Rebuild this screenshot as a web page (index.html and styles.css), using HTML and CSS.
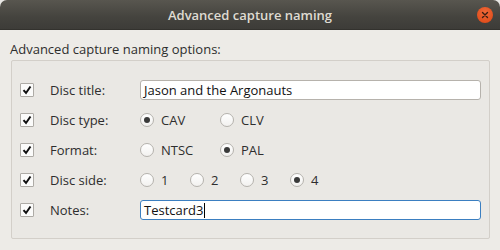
FILE: index.html
```html
<!DOCTYPE html>
<html>
<head>
<meta charset="utf-8">
<link rel="stylesheet" href="styles.css">
</head>
<body>
<div class="window">
  <div class="titlebar">
    <span class="title">Advanced capture naming</span>
    <span class="close"><svg width="16" height="16" viewBox="0 0 16 16"><path d="M5.5 5.5 L10.5 10.5 M10.5 5.5 L5.5 10.5" stroke="#3a1e12" stroke-width="1.4" stroke-linecap="round"/></svg></span>
  </div>
  <div class="content">
    <div class="heading">Advanced capture naming options:</div>
    <div class="group">
      <div class="row">
        <span class="check"><svg width="12" height="12" viewBox="0 0 12 12"><path d="M2.5 6.2 L5 9 L9.5 2.5" fill="none" stroke="#111" stroke-width="2"/></svg></span>
        <span class="label">Disc title:</span>
        <div class="input">Jason and the Argonauts</div>
      </div>
      <div class="row">
        <span class="check"><svg width="12" height="12" viewBox="0 0 12 12"><path d="M2.5 6.2 L5 9 L9.5 2.5" fill="none" stroke="#111" stroke-width="2"/></svg></span>
        <span class="label">Disc type:</span>
        <span class="opt wide"><span class="radio on"></span>CAV</span>
        <span class="opt wide"><span class="radio"></span>CLV</span>
      </div>
      <div class="row">
        <span class="check"><svg width="12" height="12" viewBox="0 0 12 12"><path d="M2.5 6.2 L5 9 L9.5 2.5" fill="none" stroke="#111" stroke-width="2"/></svg></span>
        <span class="label">Format:</span>
        <span class="opt wide"><span class="radio"></span>NTSC</span>
        <span class="opt wide"><span class="radio on"></span>PAL</span>
      </div>
      <div class="row">
        <span class="check"><svg width="12" height="12" viewBox="0 0 12 12"><path d="M2.5 6.2 L5 9 L9.5 2.5" fill="none" stroke="#111" stroke-width="2"/></svg></span>
        <span class="label">Disc side:</span>
        <span class="opt"><span class="radio"></span>1</span>
        <span class="opt"><span class="radio"></span>2</span>
        <span class="opt"><span class="radio"></span>3</span>
        <span class="opt"><span class="radio on"></span>4</span>
      </div>
      <div class="row">
        <span class="check"><svg width="12" height="12" viewBox="0 0 12 12"><path d="M2.5 6.2 L5 9 L9.5 2.5" fill="none" stroke="#111" stroke-width="2"/></svg></span>
        <span class="label">Notes:</span>
        <div class="input focus">Testcard3<span class="cursor"></span></div>
      </div>
    </div>
  </div>
</div>
</body>
</html>
```

FILE: styles.css
```css
html, body {
  margin: 0;
  padding: 0;
  background: #e8e7e4;
}
body {
  width: 500px;
  height: 250px;
  overflow: hidden;
  font-family: "Open Sans", "Noto Sans", sans-serif;
  font-size: 13px;
  color: #2e2e2e;
}
.window {
  width: 500px;
  height: 250px;
  background: #edebe7;
  border-radius: 7px 7px 0 0;
  overflow: hidden;
}
.titlebar {
  height: 30px;
  background: linear-gradient(#58564f, #44433e 60%, #3d3c38);
  border-bottom: 1px solid #33322e;
  box-sizing: border-box;
  display: flex;
  align-items: center;
  justify-content: center;
  position: relative;
}
.title {
  color: #dfdbd2;
  font-weight: 600;
  font-size: 13px;
}
.close {
  position: absolute;
  right: 7px;
  top: 7px;
  width: 16px;
  height: 16px;
  border-radius: 50%;
  background: radial-gradient(circle at 50% 35%, #f06a3a, #e2501e 70%, #c94418);
  display: flex;
}
.content {
  padding: 11px 10px 9px 11px;
}
.heading {
  height: 19px;
  line-height: 17px;
  margin-left: -1px;
}
.group {
  border: 1px solid #d3cfc9;
  border-radius: 2px;
  background: #eae8e4;
  padding: 14px 8px 13px 8px;
}
.row {
  height: 30px;
  display: flex;
  align-items: center;
}
.check {
  width: 12px;
  height: 12px;
  border: 1px solid #aeaba6;
  background: #fbfbfa;
  border-radius: 1px;
  display: flex;
  margin-right: 16px;
}
.label {
  width: 90px;
}
.input {
  flex: 1;
  height: 18px;
  border: 1px solid #b6b2ac;
  border-radius: 3px;
  background: #fff;
  color: #111;
  padding-left: 3px;
  line-height: 18px;
  display: flex;
  align-items: center;
}
.input.focus {
  border-color: #3b7fc1;
}
.cursor {
  width: 1px;
  height: 15px;
  background: #000;
  margin-left: 1px;
}
.opt {
  width: 50px;
  display: flex;
  align-items: center;
}
.opt.wide {
  width: 80px;
}
.radio {
  width: 12px;
  height: 12px;
  border: 1px solid #b5b2ad;
  border-radius: 50%;
  background: linear-gradient(#ffffff, #f2f1ef);
  margin-right: 7px;
  display: flex;
  align-items: center;
  justify-content: center;
}
.radio.on::after {
  content: "";
  width: 6px;
  height: 6px;
  border-radius: 50%;
  background: #3a3a3a;
}
```
